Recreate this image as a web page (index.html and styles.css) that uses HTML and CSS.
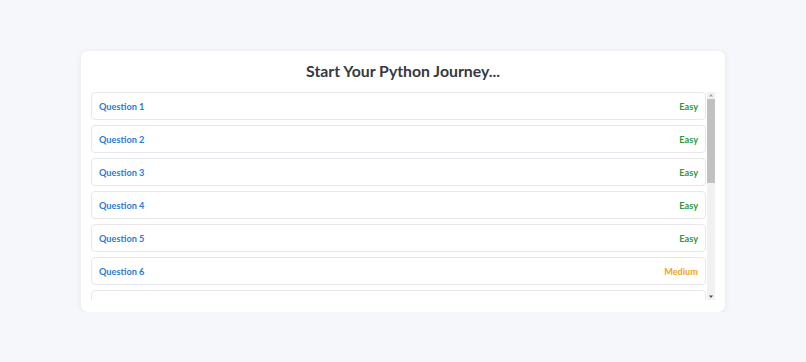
FILE: index.html
```html
<!DOCTYPE html>
<html lang="en">
<head>
<meta charset="utf-8">
<title>Python Journey</title>
<link rel="stylesheet" href="styles.css">
</head>
<body>
<main class="card">
  <h1 class="title">Start Your Python Journey...</h1>
  <div class="scroller">
    <ul class="list">
      <li class="item"><a class="q" href="#">Question 1</a><span class="lvl easy">Easy</span></li>
      <li class="item"><a class="q" href="#">Question 2</a><span class="lvl easy">Easy</span></li>
      <li class="item"><a class="q" href="#">Question 3</a><span class="lvl easy">Easy</span></li>
      <li class="item"><a class="q" href="#">Question 4</a><span class="lvl easy">Easy</span></li>
      <li class="item"><a class="q" href="#">Question 5</a><span class="lvl easy">Easy</span></li>
      <li class="item"><a class="q" href="#">Question 6</a><span class="lvl medium">Medium</span></li>
      <li class="item"><a class="q" href="#">Question 7</a><span class="lvl medium">Medium</span></li>
      <li class="item"><a class="q" href="#">Question 8</a><span class="lvl medium">Medium</span></li>
      <li class="item"><a class="q" href="#">Question 9</a><span class="lvl medium">Medium</span></li>
      <li class="item"><a class="q" href="#">Question 10</a><span class="lvl medium">Medium</span></li>
    </ul>
    <div class="sbar" aria-hidden="true">
      <div class="sbtn"><svg width="8" height="7" viewBox="0 0 8 7"><polygon points="4,2 6,4.5 2,4.5" fill="#a3a3a3"/></svg></div>
      <div class="sthumb"></div>
      <div class="strack"></div>
      <div class="sbtn"><svg width="8" height="7" viewBox="0 0 8 7"><polygon points="2,2.5 6,2.5 4,5" fill="#505050"/></svg></div>
    </div>
  </div>
</main>
</body>
</html>
```
FILE: styles.css
```css
html, body {
  margin: 0;
  padding: 0;
}
body {
  background: #f5f7fa;
  font-family: "Lato", "Open Sans", sans-serif;
  padding-top: 51px;
}
.card {
  width: 644px;
  box-sizing: border-box;
  margin: 0 auto;
  background: #ffffff;
  border-radius: 7px;
  box-shadow: 0 1px 6px rgba(0, 0, 0, 0.08);
  padding: 8px 10px 12px 10px;
}
.title {
  margin: 0 0 10px 0;
  text-align: center;
  font-size: 15.8px;
  line-height: 23px;
  font-weight: 700;
  color: #343a40;
}
.scroller {
  display: flex;
  height: 208px;
}
.list {
  flex: 1;
  list-style: none;
  margin: 0;
  padding: 0;
  overflow: hidden;
}
.item {
  display: flex;
  justify-content: space-between;
  align-items: center;
  height: 28px;
  box-sizing: border-box;
  margin-bottom: 5px;
  margin-right: 1px;
  padding: 0 7px 0 7px;
  border: 1px solid #e6e8eb;
  border-radius: 4px;
  background: #fff;
  font-size: 9.2px;
  font-weight: 700;
}
.q {
  color: #2b7bd6;
  text-decoration: none;
}
.lvl.easy { color: #2e9a3a; }
.lvl.medium { color: #f2a516; }
.lvl.hard { color: #dc3545; }

.sbar {
  width: 8px;
  display: flex;
  flex-direction: column;
  background: #f1f1f1;
}
.sbtn {
  height: 7px;
  display: flex;
}
.sbtn svg {
  display: block;
}
.sthumb {
  height: 84px;
  background: #c1c1c1;
}
.strack {
  flex: 1;
}
```
